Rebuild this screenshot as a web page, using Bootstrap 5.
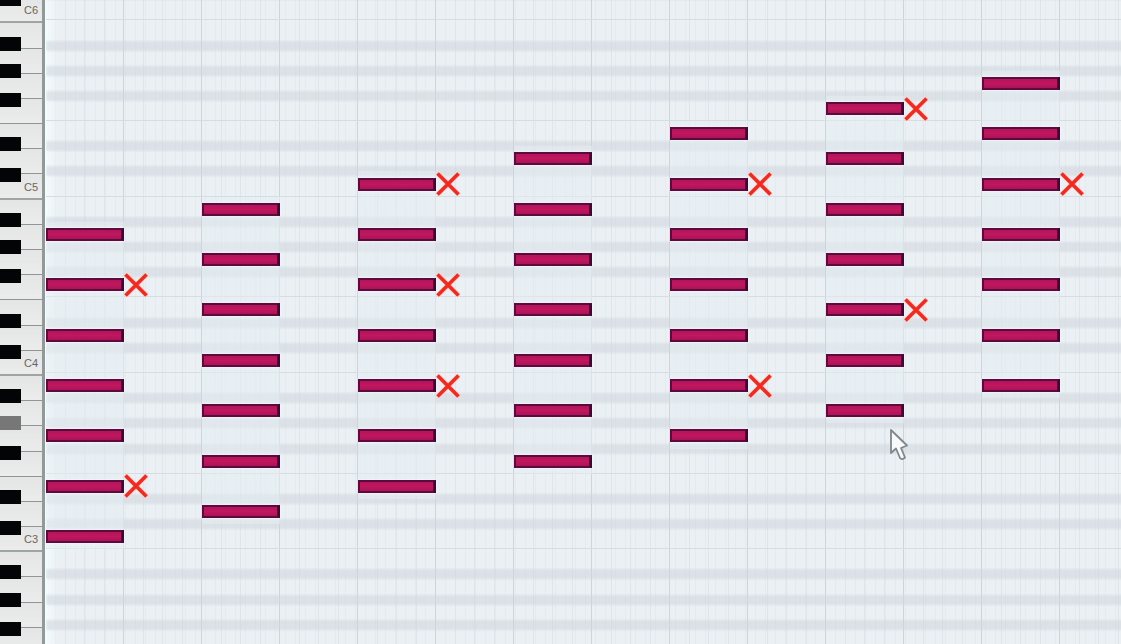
<!DOCTYPE html>
<html lang="en">
<head>
<meta charset="utf-8">
<meta name="viewport" content="width=device-width, initial-scale=1">
<title>Piano roll</title>
<link href="https://cdn.jsdelivr.net/npm/bootstrap@5.3.0/dist/css/bootstrap.min.css" rel="stylesheet">
<style>
  body { font-family: "Liberation Sans", sans-serif; background: #e9eff4; }
  .editor { height: 100vh; }
  /* 27 white-key rows, shared by the keyboard and the note area */
  .keyboard, .roll { display: grid; grid-template-rows: repeat(27, 1fr); height: 680px; }
  .keyboard { width: 46px; margin-top: -27px; background: #e7e8e8;
    border-right: 1px solid #f8fbfc; box-shadow: inset -3px 0 #929999; }
  .white-key { display: block; width: 42px; padding: 0 4px 0 0; border: 0; background: linear-gradient(#e4e5e5, #ececec);
    box-shadow: inset 0 -1px #909595; color: #666; font-size: 11px; line-height: 25px; text-align: right; }
  .octave { box-shadow: inset 0 -2px #a0a4a4; }
  .black-key { position: absolute; left: 0; width: 21px; height: 14px; padding: 0; border: 0; background: #030405; z-index: 1; }
  .kb-high { bottom: -2px; }
  .kb-mid { bottom: -4px; }
  .kb-low { bottom: -8px; }
  .kb-held { background: #777; }
  .roll { margin-top: -30px; grid-template-columns: repeat(7, 156px) 1fr;
    background:
      linear-gradient(90deg, #f4fbfd, transparent 12px) no-repeat,
      repeating-linear-gradient(90deg, transparent 0 77px, #cdd5da 77px 78px),
      repeating-linear-gradient(90deg, transparent 0 19px, #dfe5ea 19px 20px, transparent 20px 38px, #dfe5ea 38px 39px),
      repeating-linear-gradient(90deg, transparent 0 9px, #e4eaee 9px 10px, transparent 10px 19px, #e4eaee 19px 20px),
      #eaf0f4; }
  .lane { grid-column: 1 / -1; }
  .lane::after { content: ""; position: absolute; left: 0; right: 0; bottom: 0; height: 1px; background: #d6dde2; }
  .sharp::after { bottom: -5px; height: 10px; background: #cdd4db; opacity: .5; filter: blur(1px); }
  .step { z-index: 1; }
  .tone { width: 78px; height: 13px; border: 2px solid #5e0a3f; border-right-width: 3px; border-right-color: #3a093c;
    background: linear-gradient(#b3155a, #c0175f 50%, #ab1456); box-shadow: 0 0 3px #f3f7fa; }
  .glow { background: linear-gradient(90deg, #e5eef388 78px, transparent 78px); }
  .pointer { position: absolute; left: 888px; top: 427px; z-index: 2; }
</style>
</head>
<body class="overflow-hidden">
<main class="editor d-flex align-items-start overflow-hidden position-relative">
  <div class="keyboard flex-shrink-0" id="keyboard"></div>
  <div class="roll flex-grow-1 overflow-hidden" id="roll"></div>
  <svg class="pointer" width="23" height="36" viewBox="0 0 23 36" aria-hidden="true">
    <path d="M3 3 L3 26 L8 21.500 L12 31 Q14 33.500 17 30.500 L13 21 L19 18.500 Z" fill="#f7f9fb" stroke="#7f878d" stroke-width="1.800" stroke-linejoin="round"/>
  </svg>
</main>
<script src="https://cdn.jsdelivr.net/npm/bootstrap@5.3.0/dist/js/bootstrap.bundle.min.js"></script>
<script>
  const names = ['D', 'C', 'B', 'A', 'G', 'F', 'E'];
  const offset = { B: 'kb-high', A: 'kb-mid', G: 'kb-low', E: 'kb-high', D: 'kb-low' };
  const keyboard = document.getElementById('keyboard');
  const roll = document.getElementById('roll');

  for (let row = 0; row < 27; row++) {
    const name = names[row % 7];
    const octave = 6 - Math.floor((row + 5) / 7);
    const number = row < 2 ? 6 : octave;
    const cell = document.createElement('div');
    cell.className = 'position-relative d-flex';
    const label = name + number;
    cell.innerHTML = `<button type="button" class="white-key ${name === 'C' ? 'octave' : ''}" aria-label="${label}">${name === 'C' ? label : ''}</button>`;
    if (offset[name]) {
      cell.innerHTML += `<button type="button" class="black-key ${offset[name]} ${label === 'A3' ? 'kb-held' : ''}" aria-label="${label} flat"></button>`;
    }
    keyboard.append(cell);

    const lane = document.createElement('div');
    lane.className = 'lane position-relative ' + (offset[name] ? 'sharp' : '');
    lane.style.gridRow = row + 1;
    roll.append(lane);
  }

  /* Each chord stacks seven notes in thirds from its top row; wrong lists the crossed-out rows */
  const chords = [
    { top: 10, wrong: [12, 20] },
    { top: 9, wrong: [] },
    { top: 8, wrong: [8, 12, 16] },
    { top: 7, wrong: [] },
    { top: 6, wrong: [8, 16] },
    { top: 5, wrong: [5, 13] },
    { top: 4, wrong: [8] }
  ];
  const cross = '<svg class="flex-shrink-0" width="24" height="24" viewBox="0 0 24 24" role="img" aria-label="wrong"><path d="M1 1 L23 23 M23 1 L1 23" fill="none" stroke="#fbd3cf" stroke-width="5"/><path d="M1.500 1.500 L22.500 22.500 M22.500 1.500 L1.500 22.500" fill="none" stroke="#f5281f" stroke-width="3.500"/></svg>';

  chords.forEach((chord, column) => {
    for (let row = chord.top; row <= chord.top + 12; row++) {
      const step = document.createElement('div');
      step.className = 'step glow d-flex align-items-center';
      step.style.gridColumn = column + 1;
      step.style.gridRow = row + 1;
      if ((row - chord.top) % 2 === 0) {
        step.innerHTML = '<div class="tone flex-shrink-0"></div>' + (chord.wrong.includes(row) ? cross : '');
      }
      roll.append(step);
    }
  });
</script>
</body>
</html>
